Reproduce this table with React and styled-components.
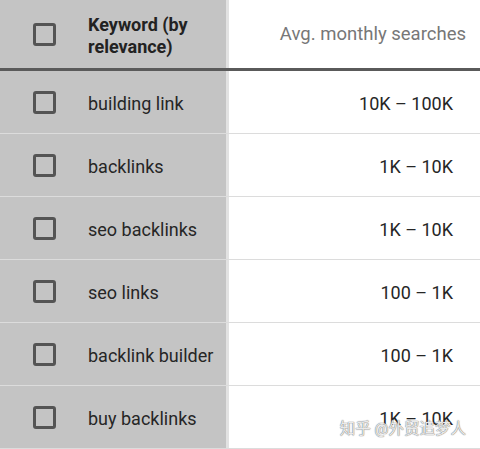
import styled, { createGlobalStyle } from "styled-components";

const GlobalStyle = createGlobalStyle`
  html, body {
    margin: 0;
    padding: 0;
    background: #ffffff;
    font-family: Roboto, "Liberation Sans", "Noto Sans CJK SC", sans-serif;
  }
`;

const rows = [
  { keyword: "building link", searches: "10K – 100K" },
  { keyword: "backlinks", searches: "1K – 10K" },
  { keyword: "seo backlinks", searches: "1K – 10K" },
  { keyword: "seo links", searches: "100 – 1K" },
  { keyword: "backlink builder", searches: "100 – 1K" },
  { keyword: "buy backlinks", searches: "1K – 10K" },
];

const App = () => {
  return (
    <>
      <GlobalStyle />
      <StTable>
        <StHeader>
          <StKeywordCell>
            <StCheckbox />
            <StHeadTitle>Keyword (by relevance)</StHeadTitle>
          </StKeywordCell>
          <StValueCell>
            <StHeadValue>Avg. monthly searches</StHeadValue>
          </StValueCell>
        </StHeader>
        {rows.map((row) => (
          <StRow key={row.keyword}>
            <StKeywordCell>
              <StCheckbox />
              <StKeyword>{row.keyword}</StKeyword>
            </StKeywordCell>
            <StValueCell>
              <StValue>{row.searches}</StValue>
            </StValueCell>
          </StRow>
        ))}
        <StWatermark>知乎 @外贸追梦人</StWatermark>
      </StTable>
    </>
  );
};

export default App;

const StTable = styled.div`
  position: relative;
  width: 480px;
  height: 449px;
  overflow: hidden;
  display: flex;
  flex-direction: column;
`;

const StHeader = styled.div`
  display: grid;
  grid-template-columns: 229px 1fr;
  height: 69px;
  border-bottom: 3px solid #5a5a5a;
`;

const StRow = styled.div`
  display: grid;
  grid-template-columns: 229px 1fr;
  height: 62px;
  border-bottom: 1px solid #dcdcdc;
  flex-shrink: 0;
`;

const StKeywordCell = styled.div`
  display: flex;
  align-items: center;
  background: #c4c4c4;
  border-right: 3px solid #e2e2e2;
  padding-left: 33px;
`;

const StValueCell = styled.div`
  display: flex;
  align-items: center;
  justify-content: flex-end;
  background: #ffffff;
`;

const StCheckbox = styled.div`
  width: 17px;
  height: 17px;
  border: 3px solid #545454;
  border-radius: 3px;
  flex-shrink: 0;
  margin-right: 32px;
  margin-top: 1px;
`;

const StHeadTitle = styled.div`
  font-weight: 700;
  font-size: 18px;
  line-height: 22px;
  color: #222222;
  width: 124px;
  margin-top: 3px;
`;

const StKeyword = styled.div`
  font-size: 18px;
  color: #262626;
  margin-top: 2px;
`;

const StHeadValue = styled.div`
  font-size: 18.5px;
  color: #777777;
  margin-right: 14px;
`;

const StValue = styled.div`
  font-size: 18px;
  color: #262626;
  margin-right: 27px;
  margin-top: 2px;
`;

const StWatermark = styled.div`
  position: absolute;
  right: 14px;
  bottom: 11px;
  font-size: 15.5px;
  color: rgba(255, 255, 255, 0.85);
  text-shadow: 0 0 1px #777, 0 0 1px #777;
`;
